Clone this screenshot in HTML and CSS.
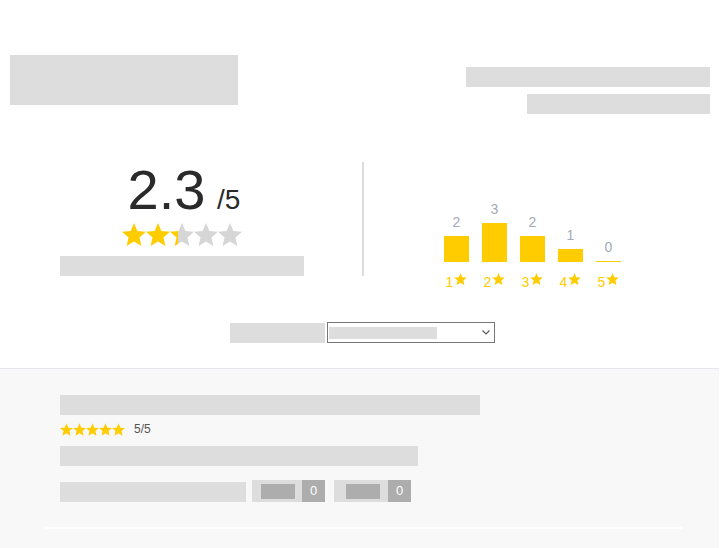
FILE: index.html
```html
<!DOCTYPE html>
<html>
<head>
<meta charset="utf-8">
<link rel="stylesheet" href="styles.css">
</head>
<body>
<svg width="0" height="0" class="defs">
  <defs>
    <symbol id="star" viewBox="2 2 20 19">
      <path d="M12 17.27L18.18 21l-1.64-7.03L22 9.24l-7.19-.61L12 2 9.19 8.63 2 9.24l5.46 4.73L5.82 21z"/>
    </symbol>
    <linearGradient id="half" x1="0" x2="1" y1="0" y2="0">
      <stop offset="0.33" stop-color="#ffcc00"/>
      <stop offset="0.33" stop-color="#d6d6d6"/>
    </linearGradient>
  </defs>
</svg>
<div class="page">
  <header class="header">
    <div class="ph ph-title"></div>
    <div class="header-right">
      <div class="ph ph-r1"></div>
      <div class="ph ph-r2"></div>
    </div>
  </header>

  <section class="summary">
    <div class="score-col">
      <div class="score"><span class="big">2.3</span> <span class="out">/5</span></div>
      <div class="stars-big">
        <svg class="s-on"><use href="#star"/></svg>
        <svg class="s-on"><use href="#star"/></svg>
        <svg class="s-half"><use href="#star"/></svg>
        <svg class="s-off"><use href="#star"/></svg>
        <svg class="s-off"><use href="#star"/></svg>
      </div>
      <div class="ph ph-sub"></div>
    </div>
    <div class="hist-col">
      <div class="hist">
        <div class="col"><span class="num">2</span><div class="bar" style="height:26px"></div><span class="lbl">1<svg class="mini"><use href="#star"/></svg></span></div>
        <div class="col"><span class="num">3</span><div class="bar" style="height:39px"></div><span class="lbl">2<svg class="mini"><use href="#star"/></svg></span></div>
        <div class="col"><span class="num">2</span><div class="bar" style="height:26px"></div><span class="lbl">3<svg class="mini"><use href="#star"/></svg></span></div>
        <div class="col"><span class="num">1</span><div class="bar" style="height:13px"></div><span class="lbl">4<svg class="mini"><use href="#star"/></svg></span></div>
        <div class="col"><span class="num">0</span><div class="bar" style="height:1px"></div><span class="lbl">5<svg class="mini"><use href="#star"/></svg></span></div>
      </div>
    </div>
  </section>

  <div class="filter">
    <div class="ph ph-filter"></div>
    <div class="select">
      <div class="ph ph-opt"></div>
      <svg class="chev" viewBox="0 0 8 5"><path d="M0.5 0.5 L4 4 L7.5 0.5"/></svg>
    </div>
  </div>

  <section class="reviews">
    <div class="review">
      <div class="ph ph-rt"></div>
      <div class="rstars">
        <svg class="sm"><use href="#star"/></svg>
        <svg class="sm"><use href="#star"/></svg>
        <svg class="sm"><use href="#star"/></svg>
        <svg class="sm"><use href="#star"/></svg>
        <svg class="sm"><use href="#star"/></svg>
        <span class="rscore">5/5</span>
      </div>
      <div class="ph ph-rbody"></div>
      <div class="actions">
        <div class="ph ph-act"></div>
        <div class="vote"><span class="vote-ph"></span><span class="cnt">0</span></div>
        <div class="vote vote-2"><span class="vote-ph"></span><span class="cnt">0</span></div>
      </div>
    </div>
    <div class="sep"></div>
  </section>
</div>
</body>
</html>
```

FILE: styles.css
```css
html, body {
  margin: 0;
  padding: 0;
  background: #ffffff;
}
body {
  font-family: "Liberation Sans", Arial, sans-serif;
  color: #222;
  overflow: hidden;
}
.defs {
  position: absolute;
  width: 0;
  height: 0;
}
.page {
  width: 719px;
}
.ph {
  background: #dddddd;
}

/* header */
.header {
  display: flex;
  justify-content: space-between;
  align-items: flex-start;
  padding: 55px 9px 0 10px;
}
.ph-title {
  width: 228px;
  height: 50px;
}
.header-right {
  display: flex;
  flex-direction: column;
  align-items: flex-end;
  gap: 7px;
  margin-top: 12px;
}
.ph-r1 { width: 244px; height: 20px; }
.ph-r2 { width: 183px; height: 20px; }

/* summary */
.summary {
  display: flex;
  align-items: flex-start;
  margin-top: 48px;
  padding-left: 60px;
  padding-right: 18px;
}
.score-col {
  width: 244px;
  padding-right: 58px;
  border-right: 2px solid #dddddd;
  display: flex;
  flex-direction: column;
  align-items: center;
}
.score {
  font-size: 56px;
  line-height: 56px;
  height: 56px;
  white-space: nowrap;
  color: #2a2a2a;
  margin-left: 4px;
}
.big { font-size: 56px; }
.out { font-size: 28px; margin-left: -4px; }
.stars-big {
  display: flex;
  margin-top: 5px;
  height: 23px;
}
.stars-big svg {
  width: 24px;
  height: 23px;
}
.s-on { fill: #ffcc00; }
.s-off { fill: #d6d6d6; }
.s-half { fill: url(#half); }
.ph-sub {
  width: 244px;
  height: 20px;
  margin-top: 10px;
}

.hist-col {
  flex: 1;
  display: flex;
  justify-content: center;
  margin-top: 39px;
}
.hist {
  display: flex;
  gap: 13px;
}
.col {
  width: 25px;
  display: flex;
  flex-direction: column;
  align-items: center;
  justify-content: flex-end;
}
.num {
  font-size: 14px;
  line-height: 16px;
  color: #a3abb8;
  margin-bottom: 6px;
}
.bar {
  width: 25px;
  background: #ffcc00;
}
.lbl {
  display: flex;
  align-items: flex-start;
  font-size: 14px;
  line-height: 16px;
  height: 16px;
  color: #ffcc00;
  margin-top: 12px;
  white-space: nowrap;
}
.mini {
  width: 13px;
  height: 12px;
  fill: #ffcc00;
  margin-left: 1px;
  margin-top: -1px;
}

/* filter */
.filter {
  display: flex;
  justify-content: center;
  align-items: flex-end;
  gap: 2px;
  margin-top: 32px;
  padding-left: 5px;
}
.ph-filter {
  width: 95px;
  height: 20px;
}
.select {
  height: 19px;
  border: 1px solid #777777;
  background: #fff;
  display: flex;
  align-items: center;
  justify-content: space-between;
  padding-left: 1px;
  padding-right: 4px;
  width: 161px;
}
.ph-opt {
  width: 108px;
  height: 12px;
}
.chev {
  width: 8px;
  height: 5px;
  fill: none;
  stroke: #555;
  stroke-width: 1.1;
}

/* reviews */
.reviews {
  margin-top: 25px;
  border-top: 1px solid #e6e6ec;
  background: #f8f8f8;
  padding-top: 26px;
  height: 153px;
}
.review {
  padding-left: 60px;
}
.ph-rt {
  width: 420px;
  height: 20px;
}
.rstars {
  display: flex;
  align-items: center;
  height: 13px;
  margin-top: 8px;
}
.sm {
  width: 13px;
  height: 13px;
  fill: #ffcc00;
}
.rscore {
  font-size: 12px;
  color: #555;
  margin-left: 9px;
  line-height: 13px;
}
.ph-rbody {
  width: 358px;
  height: 20px;
  margin-top: 10px;
}
.actions {
  display: flex;
  align-items: flex-end;
  margin-top: 14px;
}
.ph-act {
  width: 186px;
  height: 20px;
}
.vote {
  display: flex;
  align-items: center;
  height: 22px;
  background: #dddddd;
  margin-left: 6px;
  padding-left: 9px;
}
.vote-2 {
  margin-left: 9px;
  padding-left: 12px;
}
.vote-ph {
  width: 34px;
  height: 15px;
  background: #adadad;
}
.cnt {
  width: 23px;
  height: 22px;
  margin-left: 7px;
  background: #adadad;
  color: #fff;
  font-size: 13px;
  line-height: 22px;
  text-align: center;
}
.vote-2 .cnt {
  margin-left: 8px;
}
.sep {
  height: 2px;
  background: #ffffff;
  margin: 25px 37px 0 45px;
}
```
